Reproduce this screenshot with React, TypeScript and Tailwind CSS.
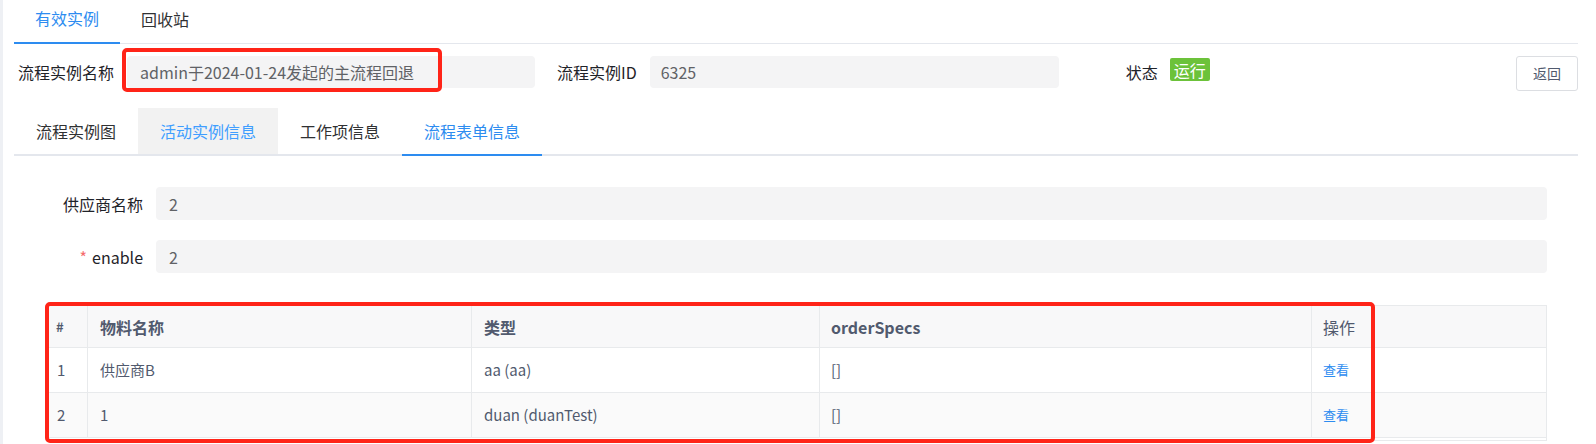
import React from "react";

const topTabs = [
  { label: "有效实例", active: true },
  { label: "回收站", active: false },
];

const subTabs = [
  { label: "流程实例图", active: false, hover: false },
  { label: "活动实例信息", active: false, hover: true },
  { label: "工作项信息", active: false, hover: false },
  { label: "流程表单信息", active: true, hover: false },
];

const rows = [
  { no: "1", name: "供应商B", type: "aa (aa)", specs: "[]" },
  { no: "2", name: "1", type: "duan (duanTest)", specs: "[]" },
];

export default function App() {
  return (
    <div className="relative flex w-[1596px] h-[444px] overflow-hidden bg-white font-['Noto_Sans_CJK_SC',sans-serif]">
      {/* left edge of the layout */}
      <div className="w-[3px] shrink-0 bg-[#eef0f4]" />

      <div className="flex-1 pl-[11px] pr-[18px]">
        {/* Top tabs */}
        <div className="flex h-[44px] border-b border-[#e4e7ed]">
          {topTabs.map((t) => (
            <div
              key={t.label}
              className={`flex items-center px-[21px] pb-[6px] text-[16px] ${
                t.active
                  ? "h-[44px] -mb-px border-b-2 border-[#2d8cf0] text-[#2d8cf0]"
                  : "text-[#303133]"
              }`}
            >
              {t.label}
            </div>
          ))}
        </div>

        {/* Instance info row */}
        <div className="flex items-start mt-[12px]">
          <div className="flex items-center h-[32px] pl-[4px] text-[16px] text-[#1f2329]">
            流程实例名称
          </div>
          <div className="ml-[13px] w-[408px] h-[32px] flex items-center px-[13px] rounded-[4px] bg-[#f4f4f5] text-[16px] text-[#606266]">
            admin于2024-01-24发起的主流程回退
          </div>

          <div className="ml-[22px] flex items-center h-[32px] text-[16px] text-[#1f2329]">
            流程实例ID
          </div>
          <div className="ml-[13px] w-[409px] h-[32px] flex items-center px-[11px] rounded-[4px] bg-[#f4f4f5] text-[16px] text-[#606266]">
            6325
          </div>

          <div className="ml-[67px] flex items-center h-[32px] text-[16px] text-[#1f2329]">
            状态
          </div>
          <div className="ml-[12px] mt-[2px] h-[23px] px-[4px] flex items-center rounded-[2px] bg-[#6cc23a] text-[16px] text-white">
            运行
          </div>

          <button className="ml-auto h-[35px] w-[62px] rounded-[3px] border border-[#dcdee2] bg-white text-[14px] text-[#515a6e]">
            返回
          </button>
        </div>

        {/* Detail tabs */}
        <div className="flex items-start h-[48px] mt-[17px] border-b-2 border-[#e4e7ed]">
          {subTabs.map((t) => (
            <div
              key={t.label}
              className={`flex items-center px-[22px] text-[16px] ${
                t.active
                  ? "h-[48px] -mb-[2px] border-b-2 border-[#2d8cf0] text-[#2d8cf0]"
                  : t.hover
                  ? "h-[46px] bg-[#f2f2f2] text-[#409eff]"
                  : "h-[46px] text-[#303133]"
              }`}
            >
              {t.label}
            </div>
          ))}
        </div>

        {/* Form pane */}
        <div className="pl-[34px] pr-[31px] pt-[31px]">
          <div className="flex items-center mb-[20px]">
            <div className="w-[108px] pr-[13px] text-right text-[16px] text-[#1f2329]">
              供应商名称
            </div>
            <div className="flex-1 h-[33px] flex items-center px-[13px] rounded-[4px] bg-[#f4f4f5] text-[16px] text-[#606266]">
              2
            </div>
          </div>
          <div className="flex items-center">
            <div className="w-[108px] pr-[13px] text-right text-[16px] text-[#1f2329]">
              <span className="text-[#f56c6c] mr-[5px]">*</span>enable
            </div>
            <div className="flex-1 h-[33px] flex items-center px-[13px] rounded-[4px] bg-[#f4f4f5] text-[16px] text-[#606266]">
              2
            </div>
          </div>

          {/* Table */}
          <div className="mt-[32px] border border-[#e8eaec] text-[15px] text-[#515a6e]">
            <div className="grid grid-cols-[39px_384px_348px_492px_61px_1fr] h-[42px] bg-[#f8f8f9] border-b border-[#e8eaec] font-bold text-[16px]">
              <div className="flex items-center pl-[7px] border-r border-[#e8eaec] text-[13px]">#</div>
              <div className="flex items-center pl-[12px] border-r border-[#e8eaec]">物料名称</div>
              <div className="flex items-center pl-[12px] border-r border-[#e8eaec]">类型</div>
              <div className="flex items-center pl-[11px] border-r border-[#e8eaec]">orderSpecs</div>
              <div className="flex items-center pl-[11px] border-r border-[#e8eaec] font-normal">操作</div>
              <div />
            </div>
            {rows.map((r, i) => (
              <div
                key={r.no}
                className={`grid grid-cols-[39px_384px_348px_492px_61px_1fr] h-[45px] border-b border-[#e8eaec] ${
                  i % 2 === 1 ? "bg-[#fafafa]" : "bg-white"
                }`}
              >
                <div className="flex items-center pl-[8px] border-r border-[#e8eaec]">{r.no}</div>
                <div className="flex items-center pl-[12px] border-r border-[#e8eaec]">{r.name}</div>
                <div className="flex items-center pl-[12px] border-r border-[#e8eaec]">{r.type}</div>
                <div className="flex items-center pl-[11px] border-r border-[#e8eaec]">{r.specs}</div>
                <div className="flex items-center pl-[11px] border-r border-[#e8eaec] text-[13px] text-[#2d8cf0]">
                  查看
                </div>
                <div />
              </div>
            ))}
            <div className="h-[2px]" />
          </div>
        </div>
      </div>

      {/* Annotation boxes */}
      <div className="absolute left-[122px] top-[48px] w-[320px] h-[44px] border-4 border-[#ff2418] rounded-[5px]" />
      <div className="absolute left-[45px] top-[302px] w-[1330px] h-[141px] border-4 border-[#ff2418] rounded-[5px]" />
    </div>
  );
}
